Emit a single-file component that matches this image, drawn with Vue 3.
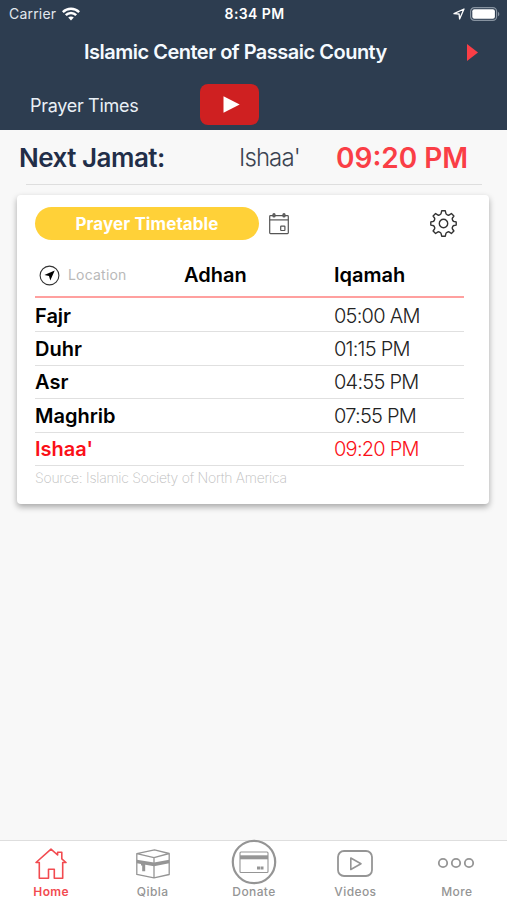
<script setup>
import { ref } from 'vue';

const prayers = [
  { name: 'Fajr', iqamah: '05:00 AM' },
  { name: 'Duhr', iqamah: '01:15 PM' },
  { name: 'Asr', iqamah: '04:55 PM' },
  { name: 'Maghrib', iqamah: '07:55 PM' },
  { name: "Ishaa'", iqamah: '09:20 PM' }
];

const next = prayers[4];

const tabs = ['Home', 'Qibla', 'Donate', 'Videos', 'More'];
const activeTab = ref('Home');
</script>

<template>
  <div class="screen">
    <header class="header">
      <div class="status">
        <div class="status-left">
          <span class="carrier">Carrier</span>
          <svg class="wifi" width="18" height="14" viewBox="0 0 18 14" fill="none" stroke="#fff" stroke-width="2.5">
            <path d="M.8 5.100C5.400.5 12.600.5 17.200 5.100" />
            <path d="M3.800 8.200c2.900-2.900 7.500-2.900 10.400 0" />
            <path d="M6.200 10.600c1.600-1.500 4-1.500 5.600 0L9 13.600z" fill="#fff" stroke="none" />
          </svg>
        </div>
        <span class="clock">8:34 PM</span>
        <div class="status-right">
          <svg width="12" height="12" viewBox="0 0 12 12" fill="none" stroke="#fff" stroke-width="1.300" stroke-linejoin="round">
            <path d="M1 5.700 11 1 6.600 11 6.100 6z" />
          </svg>
          <svg width="30" height="14" viewBox="0 0 30 14">
            <rect x=".6" y=".6" width="26" height="12.800" rx="3.800" fill="none" stroke="#8793a0" stroke-width="1.200" />
            <rect x="2.300" y="2.300" width="22.600" height="9.400" rx="2" fill="#fff" />
            <path d="M28 4.700c1.800.8 1.800 3.800 0 4.600z" fill="#8793a0" />
          </svg>
        </div>
      </div>
      <div class="title-row">
        <h1 class="title">Islamic Center of Passaic County</h1>
        <svg class="arrow" width="11" height="17" viewBox="0 0 11 17">
          <path d="M0 0 11 8.500 0 17z" fill="#fa3e46" />
        </svg>
      </div>
      <div class="sub-row">
        <span class="sub-title">Prayer Times</span>
        <button class="play">
          <svg width="17" height="17" viewBox="0 0 17 17"><path d="M.5.3 16.700 8.500.5 16.700z" fill="#fff" /></svg>
        </button>
      </div>
    </header>

    <section class="next">
      <span class="next-label">Next Jamat:</span>
      <span class="next-name">{{ next.name }}</span>
      <span class="next-time">{{ next.iqamah }}</span>
    </section>

    <main class="card">
      <div class="toolbar">
        <button class="pill">Prayer Timetable</button>
        <svg class="calendar" width="20" height="22" viewBox="0 0 20 22" fill="none" stroke="#555" stroke-width="1.200">
          <rect x=".7" y="2.600" width="18.600" height="18" rx=".8" />
          <path d="M.7 6.900h18.600" />
          <rect x="4" y=".7" width="2" height="3.300" rx="1" fill="#777" />
          <rect x="14" y=".7" width="2" height="3.300" rx="1" fill="#777" />
          <rect x="11.700" y="13.100" width="4.200" height="4.400" rx=".5" />
        </svg>
        <svg class="gear" width="27" height="27" viewBox="-13.500 -13.500 27 27" fill="none" stroke="#333" stroke-width="1.400" stroke-linejoin="round">
          <path d="M-1.800-12.700h3.600l.6 2.600q.2.900 1.100 1.300l.8.300q.9.400 1.600-.1l2-1.400 2.500 2.500-1.400 2q-.5.700-.1 1.600l.3.800q.4.900 1.300 1.100l2.200.4v3.200l-2.200.4q-.9.200-1.300 1.100l-.3.800q-.4.900.1 1.600l1.400 2-2.500 2.500-2-1.400q-.7-.5-1.600-.1l-.8.300q-.9.400-1.100 1.300l-.6 2.600h-3.600l-.6-2.600q-.2-.9-1.100-1.300l-.8-.3q-.9-.4-1.600.1l-2 1.400-2.500-2.500 1.400-2q.5-.7.100-1.600l-.3-.8q-.4-.9-1.300-1.100l-2.200-.4v-3.200l2.200-.4q.9-.2 1.300-1.100l.3-.8q.4-.9-.1-1.600l-1.400-2 2.500-2.500 2 1.400q.7.500 1.600.1l.8-.3q.9-.4 1.100-1.300z" />
          <circle cx="0" cy="0" r="4.200" />
        </svg>
      </div>

      <div class="grid grid-head">
        <div class="location">
          <svg width="21" height="21" viewBox="0 0 21 21">
            <circle cx="10.500" cy="10.500" r="9.400" fill="none" stroke="#333" stroke-width="1.100" />
            <path d="M15.700 5.500 11.300 15.500 10 11 5.400 9.900z" fill="#000" />
          </svg>
          <span>Location</span>
        </div>
        <span class="adhan">Adhan</span>
        <span class="iqamah">Iqamah</span>
      </div>
      <div v-for="prayer in prayers" :key="prayer.name" :class="['grid', 'grid-row', { current: prayer === next }]">
        <span class="name">{{ prayer.name }}</span>
        <span></span>
        <span class="time">{{ prayer.iqamah }}</span>
      </div>
      <div class="source">Source: Islamic Society of North America</div>
    </main>

    <nav class="tabs">
      <div
        v-for="tab in tabs"
        :key="tab"
        :class="['tab', { active: activeTab === tab }]"
        @click="activeTab = tab"
      >
        <div class="tab-icon">
          <svg v-if="tab === 'Home'" class="low" width="32" height="32" viewBox="0 0 32 32" fill="none" stroke="currentColor" stroke-width="1.600" stroke-linejoin="round">
            <path d="M4.300 14.500H1L16 1.200l6.600 5.800V4.200h4.200v6.600l4.200 3.700h-3.300v15.700h-8.400v-9h-5.800v9H4.300z" />
          </svg>
          <!-- Kaaba -->
          <svg v-else-if="tab === 'Qibla'" class="low" width="34" height="30" viewBox="0 0 34 30" fill="none" stroke="currentColor" stroke-width="1.300" stroke-linejoin="round">
            <path d="M.8 4.600 18.500.9l14.700 3.600v21l-15.200 3.300L.8 25.400zM.8 4.600 18 8.600l15.200-4.100M18 8.600v20.200" />
            <path d="M.8 10.700 18 13.600l15.200-2.900v3.500L18 17.200.8 14.200z" fill="currentColor" stroke="none" />
            <path d="M5 14.500h4.200v7.800H6.200v-5.700H5z" fill="currentColor" stroke="none" />
          </svg>
          <svg v-else-if="tab === 'Donate'" class="high" width="46" height="46" viewBox="0 0 46 46" fill="none" stroke="currentColor">
            <circle cx="23" cy="23" r="21.200" stroke-width="2.200" />
            <rect x="9" y="13" width="28" height="20.500" rx="1" stroke-width="1.100" />
            <path d="M9 18.300h28" stroke-width="4" />
            <path d="M26 29h6.500" stroke-width="3" stroke-dasharray="3 .5" />
          </svg>
          <svg v-else-if="tab === 'Videos'" width="36" height="27" viewBox="0 0 36 27" fill="none" stroke="currentColor" stroke-width="1.800" stroke-linejoin="round">
            <rect x="1" y="1" width="34" height="25" rx="6" />
            <path d="M13.800 8 24 13.700l-10.200 5.800z" stroke-width="1.600" />
          </svg>
          <svg v-else width="38" height="12" viewBox="0 0 38 12" fill="none" stroke="currentColor" stroke-width="1.800">
            <circle cx="6" cy="6" r="4.200" />
            <circle cx="19" cy="6" r="4.200" />
            <circle cx="32" cy="6" r="4.200" />
          </svg>
        </div>
        <span class="tab-label">{{ tab }}</span>
      </div>
    </nav>
  </div>
</template>

<style>
body {
  margin: 0;
}
</style>

<style scoped>
.screen {
  width: 507px;
  height: 900px;
  display: flex;
  flex-direction: column;
  overflow: hidden;
  background: #f8f8f8;
  font-family: Inter, "Liberation Sans", sans-serif;
  color: #000;
  white-space: nowrap;
}

button {
  border: 0;
  padding: 0;
  font: inherit;
}

svg {
  display: block;
  flex: none;
}

.header {
  height: 130px;
  flex: none;
  background: #2d3d50;
  color: #fff;
}

.status {
  height: 27px;
  padding: 0 7px 0 9px;
  display: grid;
  grid-template-columns: 1fr auto 1fr;
  align-items: center;
  font-size: 14px;
}

.status-left,
.status-right {
  display: flex;
  align-items: center;
  gap: 6px;
}

.status-right {
  justify-content: flex-end;
  gap: 5px;
}

.carrier {
  color: #e2e8ee;
  letter-spacing: 0.2px;
}

.clock {
  font-weight: 600;
  letter-spacing: 0.4px;
}

.title-row {
  height: 50px;
  padding: 0 29px 0 84px;
  display: flex;
  align-items: center;
  justify-content: space-between;
}

.title {
  margin: 0;
  font-size: 20px;
  font-weight: 600;
  letter-spacing: -0.5px;
  color: #f5faff;
}

.sub-row {
  height: 55px;
  padding-left: 30px;
  display: flex;
  align-items: center;
}

.sub-title {
  width: 170px;
  padding-top: 1px;
  font-size: 18px;
  letter-spacing: -0.3px;
  color: #e9f0f6;
}

.play {
  width: 59px;
  height: 41px;
  padding-left: 3px;
  display: flex;
  align-items: center;
  justify-content: center;
  border-radius: 8px;
  background: #cf2021;
}

.next {
  height: 54px;
  flex: none;
  margin: 0 25px 0 26px;
  display: flex;
  align-items: center;
  border-bottom: 1px solid #dedede;
}

.next-label {
  width: 220px;
  margin-left: -7px;
  padding-top: 1px;
  font-size: 26px;
  font-weight: 600;
  letter-spacing: -0.5px;
  color: #222e48;
}

.next-name {
  width: 97px;
  padding-top: 1px;
  font-size: 24px;
  font-weight: 300;
  letter-spacing: -0.9px;
  color: #3c4452;
}

.next-time {
  padding-top: 2px;
  font-size: 28px;
  font-weight: 600;
  color: #fa3e46;
}

.card {
  width: 472px;
  height: 309px;
  flex: none;
  margin: 10px 0 0 17px;
  padding: 12px 25px 0 18px;
  box-sizing: border-box;
  border-radius: 4px;
  background: #fff;
  box-shadow: 0 3px 6px rgba(0, 0, 0, 0.33);
}

.toolbar {
  height: 33px;
  display: flex;
  align-items: center;
}

.pill {
  width: 224px;
  height: 33px;
  border-radius: 17px;
  background: #ffd138;
  color: #fff;
  font-size: 17px;
  font-weight: 700;
  letter-spacing: 0.1px;
}

.calendar {
  margin-left: 10px;
}

.gear {
  margin: 0 7px 0 auto;
}

.grid {
  display: grid;
  grid-template-columns: 149px 150px 1fr;
  align-items: center;
}

.grid-head {
  height: 56px;
  border-bottom: 2px solid #ffa09f;
  font-size: 20px;
  font-weight: 600;
}

.adhan,
.iqamah {
  padding-top: 13px;
}

.location {
  padding: 15px 0 0 4px;
  display: flex;
  align-items: center;
  gap: 8px;
  font-size: 14px;
  font-weight: 400;
  letter-spacing: 0.2px;
  color: #b9b9b9;
}

.location span {
  padding-bottom: 2px;
}

.grid-row {
  height: 33.4px;
  padding-top: 1px;
  box-sizing: border-box;
  border-bottom: 1px solid #e0e0e0;
  font-size: 20px;
}

.grid-head + .grid-row {
  height: 34.4px;
  padding-top: 2px;
}

.name {
  font-weight: 600;
}

.time {
  font-weight: 300;
  letter-spacing: -0.75px;
  color: #222;
}

.current .name,
.current .time {
  color: #fb1018;
}

.source {
  padding-top: 3px;
  font-size: 14px;
  font-weight: 200;
  line-height: 18px;
  letter-spacing: -0.26px;
  color: #bdbdbd;
}

.tabs {
  height: 60px;
  flex: none;
  margin-top: auto;
  display: flex;
  border-top: 1px solid #dedede;
  box-sizing: border-box;
  background: #fff;
  color: #959595;
}

.tab {
  flex: 1;
  display: flex;
  flex-direction: column;
  align-items: center;
  cursor: pointer;
}

.tab-icon {
  height: 44px;
  display: flex;
  align-items: center;
}

.low {
  margin: 2px 0 0 1px;
}

.high {
  margin-top: -2px;
}

.tab-label {
  padding-left: 1px;
  font-size: 12px;
  line-height: 13px;
  font-weight: 500;
  letter-spacing: 0.4px;
}

.active .tab-label {
  font-weight: 600;
}

.active {
  color: #f24b50;
}
</style>
